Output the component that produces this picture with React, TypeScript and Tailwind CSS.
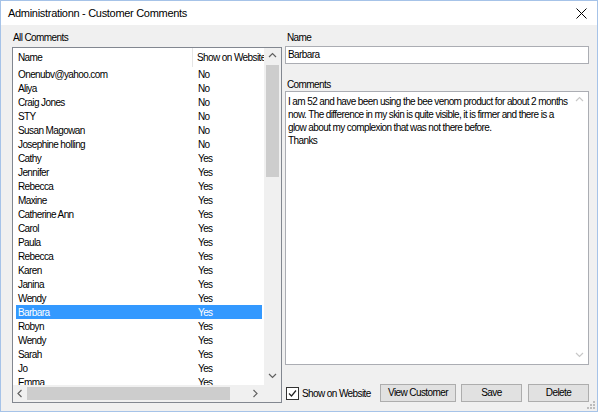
import React from 'react';

const comments: [string, string][] = [
  ['Onenubv@yahoo.com', 'No'],
  ['Aliya', 'No'],
  ['Craig Jones', 'No'],
  ['STY', 'No'],
  ['Susan Magowan', 'No'],
  ['Josephine holling', 'No'],
  ['Cathy', 'Yes'],
  ['Jennifer', 'Yes'],
  ['Rebecca', 'Yes'],
  ['Maxine', 'Yes'],
  ['Catherine Ann', 'Yes'],
  ['Carol', 'Yes'],
  ['Paula', 'Yes'],
  ['Rebecca', 'Yes'],
  ['Karen', 'Yes'],
  ['Janina', 'Yes'],
  ['Wendy', 'Yes'],
  ['Barbara', 'Yes'],
  ['Robyn', 'Yes'],
  ['Wendy', 'Yes'],
  ['Sarah', 'Yes'],
  ['Jo', 'Yes'],
  ['Emma', 'Yes'],
];

function Chevron({ dir, color = '#606060' }: { dir: 'up' | 'down' | 'left' | 'right'; color?: string }) {
  const pts = {
    up: '1,5 4.5,1.5 8,5',
    down: '1,2 4.5,5.5 8,2',
    left: '5.5,1 2,4.5 5.5,8',
    right: '2.5,1 6,4.5 2.5,8',
  }[dir];
  return (
    <svg width="9" height="9" viewBox="0 0 9 9">
      <polyline points={pts} fill="none" stroke={color} strokeWidth="1.2" />
    </svg>
  );
}

export default function App() {
  const selected = 17;
  return (
    <div
      className="w-[598px] h-[412px] border border-[#a6c3e8] bg-[#f0f0f0] flex flex-col relative text-[10px] tracking-[-0.6px] text-black"
      style={{ fontFamily: '"Liberation Sans", Arial, sans-serif' }}
    >
      {/* title bar */}
      <div className="h-[24px] bg-white flex items-center justify-between pl-[7px] pr-[8px]">
        <span className="text-[11px] tracking-[-0.3px] pt-[1px]">Administrationn - Customer Comments</span>
        <svg width="11" height="11" viewBox="0 0 11 11" className="mr-[2px]">
          <path d="M0.5 0.5 L10.5 10.5 M10.5 0.5 L0.5 10.5" stroke="#000" strokeWidth="1" />
        </svg>
      </div>

      {/* body */}
      <div className="flex-1 flex pl-[11px] pr-[8px] pt-[6px] gap-[3px]">
        {/* left: list */}
        <div className="w-[270px] flex flex-col">
          <div className="h-[16px] leading-[14px] pl-[1px]">All Comments</div>
          <div className="h-[356px] border border-[#828790] bg-white grid grid-cols-[251px_17px] grid-rows-[337px_17px]">
            <div className="overflow-hidden">
              <div className="h-[19px] flex leading-[19px]">
                <div className="w-[180px] pl-[5px] border-r border-[#e5e5e5]">Name</div>
                <div className="flex-1 pl-[4px] whitespace-nowrap overflow-hidden">Show on Website</div>
              </div>
              {comments.map(([name, show], i) => (
                <div
                  key={i}
                  className={`h-[14px] leading-[15px] flex ml-[3px] mr-[2px] ${i === selected ? 'bg-[#3399ff] text-white' : ''}`}
                >
                  <div className="w-[178px] pl-[2px]">{name}</div>
                  <div className="pl-[4px]">{show}</div>
                </div>
              ))}
            </div>
            {/* vertical scrollbar */}
            <div className="bg-[#f0f0f0] flex flex-col items-center">
              <div className="h-[17px] flex items-center justify-center">
                <Chevron dir="up" />
              </div>
              <div className="w-[13px] h-[112px] bg-[#cdcdcd]" />
              <div className="flex-1" />
              <div className="h-[17px] flex items-center justify-center">
                <Chevron dir="down" />
              </div>
            </div>
            {/* horizontal scrollbar */}
            <div className="bg-[#f0f0f0] flex items-center">
              <div className="w-[14px] flex items-center justify-center">
                <Chevron dir="left" />
              </div>
              <div className="h-[13px] w-[203px] bg-[#cdcdcd]" />
              <div className="flex-1" />
              <div className="w-[17px] flex items-center justify-center">
                <Chevron dir="right" />
              </div>
            </div>
            <div className="bg-[#f0f0f0]" />
          </div>
        </div>

        {/* right: details */}
        <div className="w-[304px] flex flex-col">
          <div className="h-[15px] leading-[14px] pl-[2px]">Name</div>
          <div className="h-[18px] border border-[#abadb3] bg-white pl-[2px] leading-[16px]">Barbara</div>
          <div className="mt-[13px] h-[14px] leading-[16px] pl-[2px]">Comments</div>
          <div className="h-[274px] border border-[#abadb3] bg-white flex">
            <div className="flex-1 pl-[2px] pt-[3px] leading-[13px]">
              I am 52 and have been using the bee venom product for about 2 months now. The difference in my skin is
              quite visible, it is firmer and there is a glow about my complexion that was not there before.
              <br />
              Thanks
            </div>
            <div className="w-[17px] flex flex-col justify-between items-center py-[4px]">
              <Chevron dir="up" color="#c8c8c8" />
              <Chevron dir="down" color="#c8c8c8" />
            </div>
          </div>
          <div className="mt-[19px] h-[18px] flex items-center whitespace-nowrap">
            <div className="w-[13px] h-[13px] border border-[#333] bg-white flex items-center justify-center ml-[1px]">
              <svg width="9" height="9" viewBox="0 0 9 9">
                <polyline points="1,4.5 3.5,7 8,1.5" fill="none" stroke="#222" strokeWidth="1.2" />
              </svg>
            </div>
            <span className="ml-[3px] w-[78px]">Show on Website</span>
            <button className="w-[76px] h-[18px] bg-[#e1e1e1] border border-[#adadad] leading-[16px]">
              View Customer
            </button>
            <button className="ml-[5px] w-[61px] h-[18px] bg-[#e1e1e1] border border-[#adadad] leading-[16px]">Save</button>
            <button className="ml-[6px] w-[61px] h-[18px] bg-[#e1e1e1] border border-[#adadad] leading-[16px]">Delete</button>
          </div>
        </div>
      </div>

      {/* resize grip */}
      <svg width="10" height="10" viewBox="0 0 10 10" className="absolute right-[1px] bottom-[1px]">
        <rect x="7" y="1" width="2" height="2" fill="#bcbcbc" />
        <rect x="4" y="4" width="2" height="2" fill="#bcbcbc" />
        <rect x="7" y="4" width="2" height="2" fill="#bcbcbc" />
        <rect x="1" y="7" width="2" height="2" fill="#bcbcbc" />
        <rect x="4" y="7" width="2" height="2" fill="#bcbcbc" />
        <rect x="7" y="7" width="2" height="2" fill="#bcbcbc" />
      </svg>
    </div>
  );
}
